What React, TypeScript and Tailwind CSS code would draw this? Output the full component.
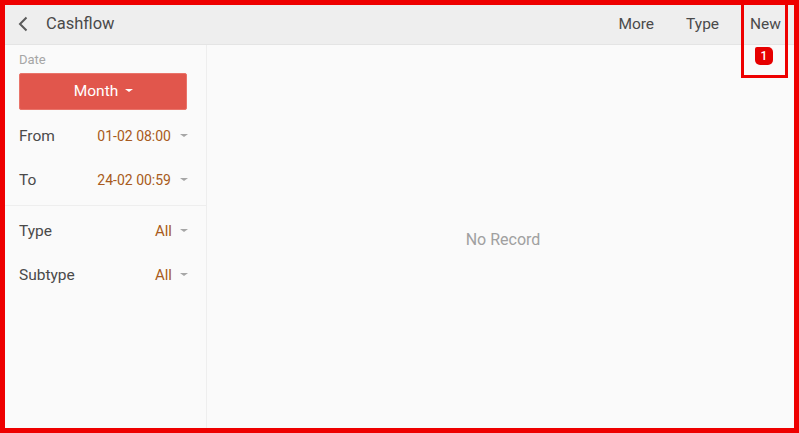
const font = "font-['Roboto',sans-serif]";

function Caret({ className }: { className: string }) {
  return <span className={`inline-block h-0 w-0 border-x-[4px] border-t-[3px] border-x-transparent ${className}`} />;
}

function FilterRow({ label, value, big }: { label: string; value: string; big?: boolean }) {
  return (
    <div className="flex h-[44px] items-center justify-between pl-[14px] pr-[18px]">
      <span className="pt-[1px] text-[15.5px] text-[#4a4a4a]">{label}</span>
      <span className={`flex items-center text-[#a85a20] ${big ? "gap-[8px] text-[15px]" : "gap-[9px] text-[14px]"}`}>
        {value}
        <Caret className="mb-[2px] border-t-[#a6a6a6]" />
      </span>
    </div>
  );
}

export default function App() {
  return (
    <div className={`relative h-[433px] w-[799px] overflow-hidden border-[5px] border-[#ee0000] bg-[#fafafa] ${font}`}>
      <header className="flex h-[40px] items-center justify-between border-b border-[#e4e4e4] bg-[#eeeeee] text-[#4a4a4a]">
        <div className="flex items-center">
          <svg width="12" height="16" viewBox="0 0 12 16" className="ml-[12px] mb-[2px]" fill="none" stroke="#5a5a5a" strokeWidth="2">
            <path d="M9.5 1.5 3 8l6.5 6.5" />
          </svg>
          <span className="ml-[17px] mb-[1px] text-[16.5px]">Cashflow</span>
        </div>
        <nav className="mr-[13px] flex items-center text-[15.5px]">
          <span>More</span>
          <span className="ml-[32px]">Type</span>
          <span className="ml-[31px]">New</span>
        </nav>
      </header>

      <div className="flex h-[383px]">
        <aside className="w-[202px] shrink-0 border-r border-[#eeeeee]">
          <div className="px-[14px] pt-[8px] text-[13px] leading-[14px] text-[#a6a6a6]">Date</div>
          <button className="mx-[14px] mt-[6px] flex h-[37px] w-[168px] items-center justify-center gap-[7px] rounded-[2px] border border-[#e9746a] bg-[#e1564c] pl-[1px] text-[15.5px] text-white">
            Month
            <Caret className="mb-[2px] border-t-white" />
          </button>
          <div className="mt-[4px]">
            <FilterRow label="From" value="01-02 08:00" />
            <FilterRow label="To" value="24-02 00:59" />
          </div>
          <div className="mt-[3px] border-t border-[#eeeeee] pt-[3px]">
            <FilterRow label="Type" value="All" big />
            <FilterRow label="Subtype" value="All" big />
          </div>
        </aside>
        <main className="flex flex-1 items-center justify-center pl-[5px] pt-[7px] text-[16px] text-[#a0a0a0]">
          No Record
        </main>
      </div>

      {/* annotation over the New button */}
      <div className="absolute left-[736px] top-[-5px] h-[78px] w-[47px] border-[3px] border-[#ee0000]" />
      <div className="absolute left-[750px] top-[42px] flex h-[18px] w-[18px] items-center justify-center rounded-[5px] rounded-tl-[2px] bg-[#e60000] text-[12px] font-medium text-white">
        1
      </div>
    </div>
  );
}
